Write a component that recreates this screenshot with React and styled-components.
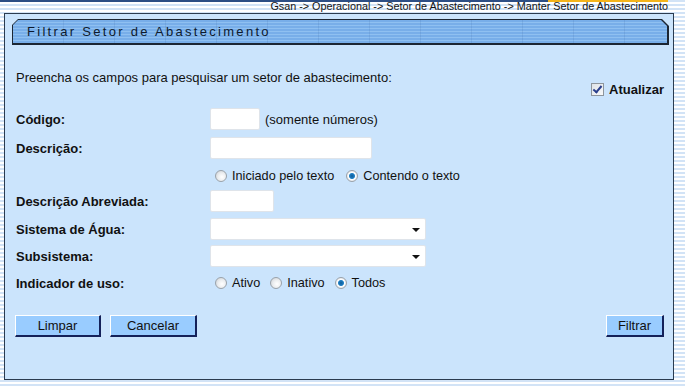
import React from "react";
import styled, { createGlobalStyle } from "styled-components";

const GlobalStyle = createGlobalStyle`
  html, body {
    margin: 0;
    padding: 0;
  }
  body {
    width: 685px;
    height: 388px;
    overflow: hidden;
    font-family: "Liberation Sans", Arial, sans-serif;
    color: #111;
    background: repeating-linear-gradient(
      to bottom,
      #d2e3f6 0,
      #d2e3f6 2px,
      #ffffff 2px,
      #ffffff 4px
    );
  }
`;

const Page = styled.div`
  display: flex;
  flex-direction: column;
  height: 388px;
`;

const Breadcrumb = styled.div`
  height: 13px;
  padding-right: 17px;
  text-align: right;
  font-size: 10.8px;
  line-height: 12px;
  color: #141414;
  background:
    linear-gradient(to right, #2d4e84 0, #2d4e84 548px, #f4b41a 548px, #f4b41a 668px, transparent 668px)
    top left / 100% 2px no-repeat;
`;

const Panel = styled.div`
  box-sizing: border-box;
  width: 670px;
  height: 367px;
  margin-left: 4px;
  border: 1px solid #2a3b4f;
  background: #cbe4fc;
  display: flex;
  flex-direction: column;
`;

const HeaderFrame = styled.div`
  margin: 5px 4px 0 7px;
  height: 26px;
  box-sizing: border-box;
  padding: 1px 2px 2px 1px;
  background: #1c2633;
  clip-path: polygon(6px 0, calc(100% - 7px) 0, 100% 7px, 100% 100%, 0 100%, 0 6px);
`;

const HeaderFill = styled.div`
  height: 100%;
  display: flex;
  align-items: center;
  padding-left: 14px;
  clip-path: polygon(5px 0, calc(100% - 6px) 0, 100% 6px, 100% 100%, 0 100%, 0 5px);
  background:
    repeating-linear-gradient(to right, transparent 0, transparent 50px, rgba(40, 80, 140, 0.12) 50px, rgba(40, 80, 140, 0.12) 51px),
    repeating-linear-gradient(to bottom, #78aee9 0, #78aee9 2px, #8fc0f1 2px, #8fc0f1 3px);
`;

const Title = styled.span`
  font-size: 13px;
  letter-spacing: 2.3px;
  color: #0d1a2e;
`;

const Body = styled.div`
  display: flex;
  flex-direction: column;
  padding: 0 9px 0 10px;
`;

const IntroRow = styled.div`
  display: flex;
  justify-content: space-between;
  align-items: flex-start;
  margin-top: 25px;
`;

const Intro = styled.p`
  margin: 0 0 0 1px;
  font-size: 13px;
  line-height: 15px;
`;

const Refresh = styled.label`
  display: flex;
  align-items: center;
  gap: 5px;
  margin-top: 12px;
  font-size: 13px;
  font-weight: bold;
`;

const CheckBox = styled.input.attrs({ type: "checkbox" })`
  appearance: none;
  margin: 0;
  width: 13px;
  height: 13px;
  box-sizing: border-box;
  border: 1px solid #8e959c;
  background: linear-gradient(135deg, #dfe3e7, #f8f9fa);
  position: relative;
  &:checked::after {
    content: "";
    position: absolute;
    left: 3px;
    top: 0px;
    width: 3px;
    height: 7px;
    border: solid #2a3f8c;
    border-width: 0 2px 2px 0;
    transform: rotate(40deg);
  }
`;

const Rows = styled.div`
  display: flex;
  flex-direction: column;
  margin-top: 11px;
`;

const Row = styled.div`
  display: flex;
  align-items: center;
  min-height: 22px;
  margin-top: ${({ $top }) => $top || 0}px;
`;

const Label = styled.span`
  width: 194px;
  padding-left: 1px;
  font-size: 13px;
  font-weight: bold;
`;

const TextInput = styled.input.attrs({ type: "text" })`
  box-sizing: border-box;
  width: ${({ $w }) => $w}px;
  height: 22px;
  margin: 0;
  border: 1px solid #dfe4ea;
  border-radius: 2px;
  background: #fff;
  font-family: inherit;
  font-size: 13px;
`;

const Hint = styled.span`
  margin-left: 5px;
  font-size: 13px;
`;

const SelectBox = styled.div`
  position: relative;
  box-sizing: border-box;
  width: 216px;
  height: 22px;
  border: 1px solid #dfe4ea;
  border-radius: 2px;
  background: #fff;
  &::after {
    content: "";
    position: absolute;
    right: 5px;
    top: 9px;
    border-left: 4px solid transparent;
    border-right: 4px solid transparent;
    border-top: 4px solid #111;
    pointer-events: none;
  }
`;

const Select = styled.select`
  appearance: none;
  width: 100%;
  height: 100%;
  border: 0;
  margin: 0;
  background: transparent;
  font-family: inherit;
  font-size: 13px;
`;

const Options = styled.div`
  display: flex;
  align-items: center;
  padding-left: ${({ $indent }) => $indent || 0}px;
`;

const Option = styled.label`
  display: flex;
  align-items: center;
  gap: 5px;
  margin-right: ${({ $space }) => $space || 10}px;
  font-size: 12.7px;
`;

const Radio = styled.input.attrs({ type: "radio" })`
  appearance: none;
  margin: 0;
  width: 12px;
  height: 12px;
  box-sizing: border-box;
  border-radius: 50%;
  border: 1px solid #9aa2aa;
  background: radial-gradient(circle at 60% 60%, #ffffff 0, #eceef0 45%, #c9cdd2 100%);
  &:checked {
    background: radial-gradient(circle at 50% 50%, #0e5b96 0, #1f7fc4 2.5px, #ffffff 3.5px, #e6e9ec 5px);
  }
`;

const ButtonBar = styled.div`
  display: flex;
  align-items: center;
  margin-top: 21px;
`;

const Button = styled.button`
  box-sizing: border-box;
  width: ${({ $w }) => $w}px;
  height: 22px;
  margin: 0 ${({ $gap }) => $gap || 0}px 0 0;
  padding: 0;
  background: #99ccff;
  border-style: solid;
  border-width: 1px 2px 2px 1px;
  border-color: #ffffff #14215a #14215a #ffffff;
  font-family: "Liberation Sans", Arial, sans-serif;
  font-size: 13px;
  color: #111;
`;

const Spacer = styled.div`
  flex: 1;
`;

const App = () => {
  return (
    <Page>
      <GlobalStyle />
      <Breadcrumb>
        Gsan -&gt; Operacional -&gt; Setor de Abastecimento -&gt; Manter Setor de Abastecimento
      </Breadcrumb>
      <Panel>
        <HeaderFrame>
          <HeaderFill>
            <Title>Filtrar Setor de Abastecimento</Title>
          </HeaderFill>
        </HeaderFrame>
        <Body>
          <IntroRow>
            <Intro>Preencha os campos para pesquisar um setor de abastecimento:</Intro>
            <Refresh>
              <CheckBox defaultChecked />
              Atualizar
            </Refresh>
          </IntroRow>
          <Rows>
            <Row>
              <Label>Código:</Label>
              <TextInput $w={50} />
              <Hint>(somente números)</Hint>
            </Row>
            <Row $top={7}>
              <Label>Descrição:</Label>
              <TextInput $w={162} />
            </Row>
            <Row $top={6}>
              <Label />
              <Options $indent={5}>
                <Option $space={12}>
                  <Radio name="tipo" />
                  Iniciado pelo texto
                </Option>
                <Option>
                  <Radio name="tipo" defaultChecked />
                  Contendo o texto
                </Option>
              </Options>
            </Row>
            <Row $top={3}>
              <Label>Descrição Abreviada:</Label>
              <TextInput $w={64} />
            </Row>
            <Row $top={6}>
              <Label>Sistema de Água:</Label>
              <SelectBox>
                <Select defaultValue="">
                  <option value=""></option>
                </Select>
              </SelectBox>
            </Row>
            <Row $top={5}>
              <Label>Subsistema:</Label>
              <SelectBox>
                <Select defaultValue="">
                  <option value=""></option>
                </Select>
              </SelectBox>
            </Row>
            <Row $top={5}>
              <Label>Indicador de uso:</Label>
              <Options $indent={5}>
                <Option>
                  <Radio name="uso" />
                  Ativo
                </Option>
                <Option>
                  <Radio name="uso" />
                  Inativo
                </Option>
                <Option>
                  <Radio name="uso" defaultChecked />
                  Todos
                </Option>
              </Options>
            </Row>
          </Rows>
          <ButtonBar>
            <Button $w={86} $gap={9}>Limpar</Button>
            <Button $w={87}>Cancelar</Button>
            <Spacer />
            <Button $w={58}>Filtrar</Button>
          </ButtonBar>
        </Body>
      </Panel>
    </Page>
  );
};

export default App;
